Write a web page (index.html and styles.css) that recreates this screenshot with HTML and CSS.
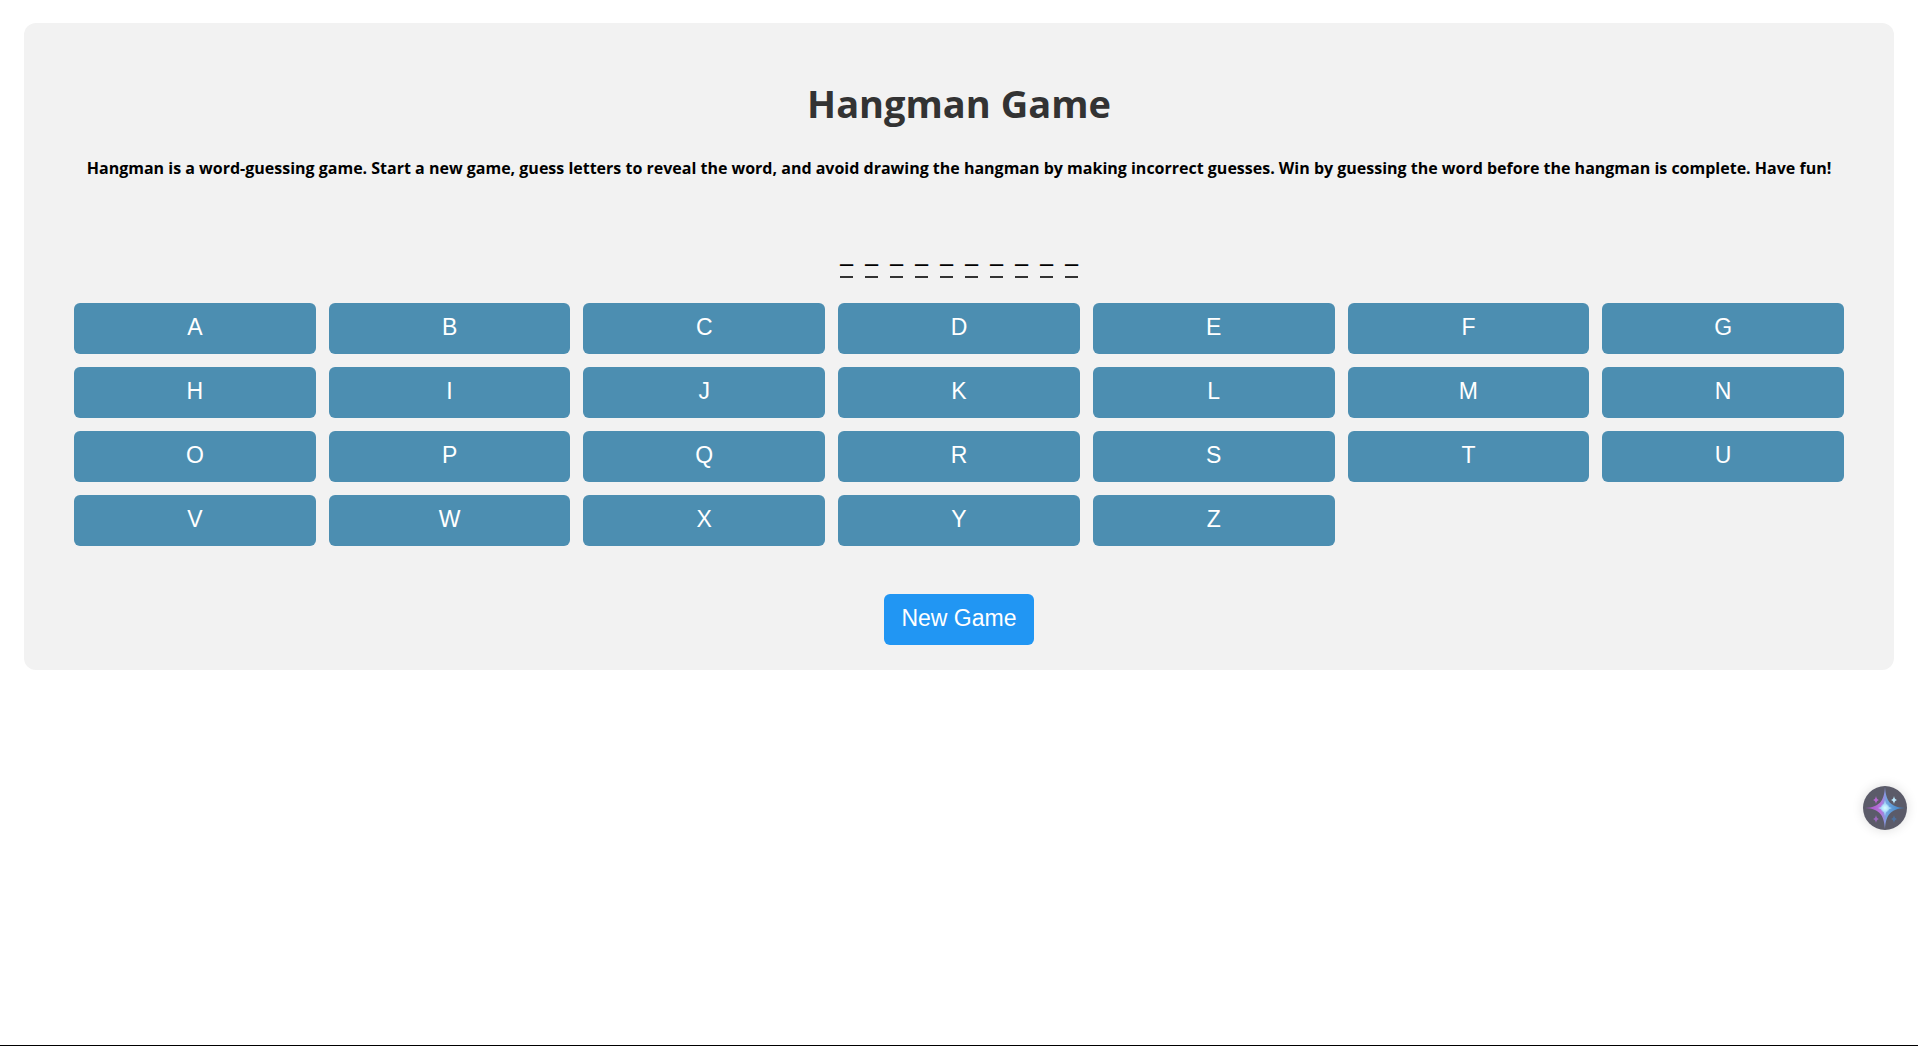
FILE: index.html
```html
<!DOCTYPE html>
<html lang="en">
<head>
  <meta charset="utf-8">
  <meta name="viewport" content="width=device-width, initial-scale=1">
  <title>Hangman Game</title>
  <link rel="stylesheet" href="styles.css">
</head>
<body>
  <main class="game">
    <h1 class="title">Hangman Game</h1>
    <p class="intro">Hangman is a word-guessing game. Start a new game, guess letters to reveal the word, and avoid drawing the hangman by making incorrect guesses. Win by guessing the word before the hangman is complete. Have fun!</p>
    <div class="word">
      <span class="letter">_</span><span class="letter">_</span><span class="letter">_</span><span class="letter">_</span><span class="letter">_</span><span class="letter">_</span><span class="letter">_</span><span class="letter">_</span><span class="letter">_</span><span class="letter">_</span>
    </div>
    <div class="keyboard">
      <button class="btn key" type="button">A</button>
      <button class="btn key" type="button">B</button>
      <button class="btn key" type="button">C</button>
      <button class="btn key" type="button">D</button>
      <button class="btn key" type="button">E</button>
      <button class="btn key" type="button">F</button>
      <button class="btn key" type="button">G</button>
      <button class="btn key" type="button">H</button>
      <button class="btn key" type="button">I</button>
      <button class="btn key" type="button">J</button>
      <button class="btn key" type="button">K</button>
      <button class="btn key" type="button">L</button>
      <button class="btn key" type="button">M</button>
      <button class="btn key" type="button">N</button>
      <button class="btn key" type="button">O</button>
      <button class="btn key" type="button">P</button>
      <button class="btn key" type="button">Q</button>
      <button class="btn key" type="button">R</button>
      <button class="btn key" type="button">S</button>
      <button class="btn key" type="button">T</button>
      <button class="btn key" type="button">U</button>
      <button class="btn key" type="button">V</button>
      <button class="btn key" type="button">W</button>
      <button class="btn key" type="button">X</button>
      <button class="btn key" type="button">Y</button>
      <button class="btn key" type="button">Z</button>
    </div>
    <button class="btn new-game" type="button">New Game</button>
  </main>

  <button class="assistant" type="button" aria-label="Assistant">
    <svg class="assistant-icon" viewBox="0 0 44 44" aria-hidden="true">
      <defs>
        <linearGradient id="star" x1="0" y1="0" x2="1" y2="0">
          <stop offset="0" stop-color="#a04fc0"/>
          <stop offset=".4" stop-color="#b874dc"/>
          <stop offset=".55" stop-color="#6fa8e0"/>
          <stop offset="1" stop-color="#3478bd"/>
        </linearGradient>
        <radialGradient id="glow">
          <stop offset="0" stop-color="#d8fbff"/>
          <stop offset=".6" stop-color="#b5e5fc"/>
          <stop offset="1" stop-color="#a0c8f8" stop-opacity="0"/>
        </radialGradient>
      </defs>
      <circle cx="22" cy="22" r="22" fill="#5b5b69"/>
      <path d="M22 1c1 14 5 20 20 21c-15 1-19 7-20 21c-1-14-5-20-20-21c15-1 19-7 20-21z" fill="url(#star)"/>
      <path d="M22 14q1 7 7 8q-6 1-7 8q-1-7-7-8q6-1 7-8z" fill="#a5daf8"/>
      <circle cx="22" cy="22" r="5" fill="url(#glow)"/>
      <path d="M13 10q.5 3.500 3 4q-2.500.5-3 4q-.5-3.500-3-4q2.500-.5 3-4z" fill="#b768d0"/>
      <path d="M31 10q.5 3.500 3 4q-2.500.5-3 4q-.5-3.500-3-4q2.500-.5 3-4z" fill="#bdeaff"/>
      <path d="M13 29q.5 3.500 3 4q-2.500.5-3 4q-.5-3.500-3-4q2.500-.5 3-4z" fill="#9d68bd"/>
      <path d="M31 29q.5 3.500 3 4q-2.500.5-3 4q-.5-3.500-3-4q2.500-.5 3-4z" fill="#4c719f"/>
    </svg>
  </button>
</body>
</html>
```
FILE: styles.css
```css
* {
  box-sizing: border-box;
}

body {
  min-height: 100vh;
  margin: 0;
  padding: 23px 24px;
  border-bottom: 1px solid #000;
  background: #fff;
  color: #000;
  font-family: "Segoe UI", "Open Sans", sans-serif;
}

.game {
  display: flex;
  flex-direction: column;
  align-items: center;
  padding: 50px 50px 25px;
  border-radius: 12px;
  background: #f2f2f2;
  text-align: center;
}

.title {
  margin: 0;
  color: #333;
  font-size: 38px;
  line-height: 60px;
}

.intro {
  margin: 23px 0 0;
  font-size: 16px;
  font-weight: 700;
  line-height: 24px;
}

.word {
  display: flex;
  gap: 12px;
  margin: 46px 0 25px;
}

.letter {
  width: 13px;
  border-bottom: 2px solid #333;
  font-size: 30px;
  line-height: 50px;
}

.keyboard {
  display: grid;
  grid-template-columns: repeat(7, 1fr);
  gap: 13px;
  width: 100%;
  margin-bottom: 48px;
}

.btn {
  padding: 11px 17px 14px;
  border: 0;
  border-radius: 6px;
  color: #fff;
  font-family: "Liberation Sans", Arial, sans-serif;
  font-size: 23px;
  line-height: 26px;
  cursor: pointer;
}

.key {
  background: #4c8eb1;
}

.new-game {
  background: #2196f3;
}

.assistant {
  position: fixed;
  right: 11px;
  bottom: 216px;
  width: 44px;
  height: 44px;
  padding: 0;
  border: 0;
  border-radius: 50%;
  background: none;
  box-shadow: 0 0 12px rgba(0, 0, 0, 0.14);
  cursor: pointer;
}

.assistant-icon {
  display: block;
}
```
